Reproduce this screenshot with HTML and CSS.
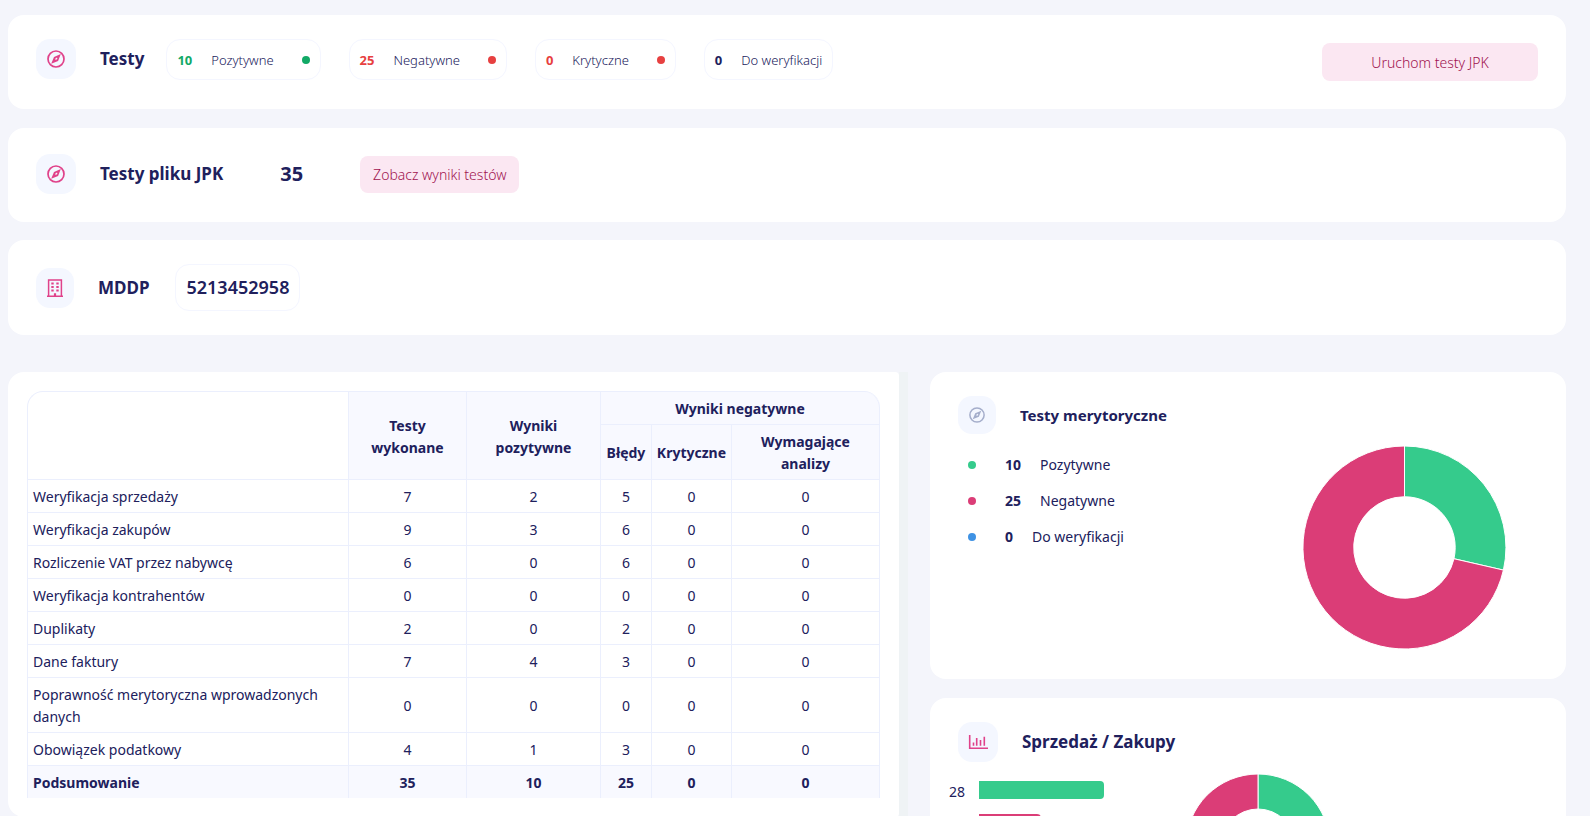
FILE: index.html
```html
<!DOCTYPE html>
<html lang="pl">
<head>
<meta charset="utf-8">
<meta name="viewport" content="width=device-width, initial-scale=1">
<title>Testy JPK</title>
<link rel="stylesheet" href="styles.css">
</head>
<body>
<svg class="defs" aria-hidden="true">
  <symbol id="compass" viewBox="0 0 18 18">
    <circle cx="9" cy="9" r="8" fill="none" stroke="currentColor" stroke-width="1.7"/>
    <path fill="currentColor" fill-rule="evenodd" d="M13.8 4.1 7 6.9 4.2 13.8 11.1 11zM9.9 7.6 10.5 8.3 9.1 10 7.9 8.9z"/>
  </symbol>
  <symbol id="building" viewBox="0 0 18 18">
    <path fill="none" stroke="currentColor" stroke-width="1.5" d="M2.6 17V.9h12.8V17M1 17.2h16"/>
    <path fill="currentColor" d="M5.3 3.4h2.4v2H5.3zm5 0h2.4v2h-2.4zM5.3 6.9h2.4v2H5.3zm5 0h2.4v2h-2.4zM5.3 10.4h2.4v2H5.3zm5 0h2.4v2h-2.4zM7.9 14.2h2.2v3H7.9z"/>
  </symbol>
  <symbol id="chart" viewBox="0 0 20 18">
    <path fill="none" stroke="currentColor" stroke-width="1.6" d="M1.7 2v13.3H20M5.5 9.5v3.3M8.7 5v7.8M12.5 7v5.8M16.3 3.7v9.1"/>
  </symbol>
</svg>
<main class="page">
  <section class="card card-tests">
    <span class="icon-box"><svg class="icon"><use href="#compass"/></svg></span>
    <h2 class="title">Testy</h2>
    <div class="pills">
      <div class="pill"><b class="ok">10</b><span>Pozytywne</span><i class="dot dot-ok"></i></div>
      <div class="pill"><b class="bad">25</b><span>Negatywne</span><i class="dot dot-bad"></i></div>
      <div class="pill"><b class="bad">0</b><span>Krytyczne</span><i class="dot dot-bad"></i></div>
      <div class="pill"><b>0</b><span>Do weryfikacji</span></div>
    </div>
    <button type="button" class="btn btn-run">Uruchom testy JPK</button>
  </section>

  <section class="card card-file">
    <span class="icon-box"><svg class="icon"><use href="#compass"/></svg></span>
    <h2 class="title">Testy pliku JPK</h2>
    <strong class="total">35</strong>
    <button type="button" class="btn">Zobacz wyniki testów</button>
  </section>

  <section class="card card-company">
    <span class="icon-box icon-box-s"><svg class="icon"><use href="#building"/></svg></span>
    <h2 class="title">MDDP</h2>
    <div class="nip">5213452958</div>
  </section>

  <div class="columns">
    <div class="scroll-pane">
      <section class="table-card">
        <table class="results">
          <colgroup><col><col class="c-done"><col class="c-pos"><col class="c-err"><col class="c-crit"><col class="c-req"></colgroup>
          <thead>
            <tr><td rowspan="2"></td><th rowspan="2" scope="col">Testy wykonane</th><th rowspan="2" scope="col">Wyniki pozytywne</th><th colspan="3" scope="colgroup">Wyniki negatywne</th></tr>
            <tr><th scope="col">Błędy</th><th scope="col">Krytyczne</th><th scope="col" class="narrow">Wymagające analizy</th></tr>
          </thead>
          <tbody>
            <tr><td>Weryfikacja sprzedaży</td><td>7</td><td>2</td><td>5</td><td>0</td><td>0</td></tr>
            <tr><td>Weryfikacja zakupów</td><td>9</td><td>3</td><td>6</td><td>0</td><td>0</td></tr>
            <tr><td>Rozliczenie VAT przez nabywcę</td><td>6</td><td>0</td><td>6</td><td>0</td><td>0</td></tr>
            <tr><td>Weryfikacja kontrahentów</td><td>0</td><td>0</td><td>0</td><td>0</td><td>0</td></tr>
            <tr><td>Duplikaty</td><td>2</td><td>0</td><td>2</td><td>0</td><td>0</td></tr>
            <tr><td>Dane faktury</td><td>7</td><td>4</td><td>3</td><td>0</td><td>0</td></tr>
            <tr><td>Poprawność merytoryczna wprowadzonych danych</td><td>0</td><td>0</td><td>0</td><td>0</td><td>0</td></tr>
            <tr><td>Obowiązek podatkowy</td><td>4</td><td>1</td><td>3</td><td>0</td><td>0</td></tr>
          </tbody>
          <tfoot>
            <tr><th scope="row">Podsumowanie</th><th>35</th><th>10</th><th>25</th><th>0</th><th>0</th></tr>
          </tfoot>
        </table>
      </section>
      <div class="track"></div>
    </div>

    <div class="side">
      <section class="card-side">
        <header class="side-head">
          <span class="icon-box icon-box-sq"><svg class="icon icon-muted"><use href="#compass"/></svg></span>
          <h3 class="side-title">Testy merytoryczne</h3>
        </header>
        <div class="merit">
          <ul class="legend">
            <li><i class="dot dot-green"></i><b>10</b><span>Pozytywne</span></li>
            <li><i class="dot dot-pink"></i><b>25</b><span>Negatywne</span></li>
            <li><i class="dot dot-blue"></i><b>0</b><span>Do weryfikacji</span></li>
          </ul>
          <svg class="donut" viewBox="-102 -102 204 204" role="img" aria-label="10 pozytywne, 25 negatywne">
            <path class="s-green" d="M0-102A102 102 0 0 1 99.4 22.7L49.7 11.3A51 51 0 0 0 0-51z"/>
            <path class="s-pink" d="M99.4 22.7A102 102 0 1 1 0-102V-51A51 51 0 1 0 49.7 11.3z"/>
          </svg>
        </div>
      </section>

      <section class="card-side">
        <header class="side-head">
          <span class="icon-box"><svg class="icon icon-chart"><use href="#chart"/></svg></span>
          <h2 class="title">Sprzedaż / Zakupy</h2>
        </header>
        <div class="sales">
          <div class="bars">
            <span class="bar-label">28</span><div class="bar bar-green"></div>
            <span></span><div class="bar bar-pink"></div>
          </div>
          <svg class="donut-s" viewBox="-72 -72 144 144" role="img" aria-label="Sprzedaż i zakupy">
            <path class="s-green" d="M0-72A72 72 0 0 1 0 72V37A37 37 0 0 0 0-37z"/>
            <path class="s-pink" d="M0 72A72 72 0 0 1 0-72V-37A37 37 0 0 0 0 37z"/>
          </svg>
        </div>
      </section>
    </div>
  </div>
</main>
</body>
</html>
```
FILE: styles.css
```css
* { box-sizing: border-box; }

body {
  margin: 0;
  height: 100vh;
  overflow: hidden;
  background: #f4f5fb;
  color: #20205c;
  font-family: "Segoe UI", "Noto Sans", "Open Sans", sans-serif;
  font-size: 14px;
  line-height: 22px;
}

h2, h3, ul { margin: 0; padding: 0; }

.defs { display: none; }

.page { padding: 15px 24px 0 8px; }

.card {
  display: flex;
  align-items: center;
  padding: 24px 28px;
  border-radius: 16px;
  background: #fff;
}

.icon-box {
  display: flex;
  flex: none;
  align-items: center;
  justify-content: center;
  width: 40px;
  height: 40px;
  border-radius: 14px;
  background: #f4f7ff;
}
.icon-box-s { width: 38px; }
.icon-box-sq { width: 38px; height: 38px; }

.icon { width: 18px; height: 18px; color: #e0428a; }
.icon-muted { width: 16px; height: 16px; color: #a5aecb; }
.icon-chart { width: 20px; }

.title { font-size: 17px; font-weight: 700; line-height: 24px; }

/* Test counters */
.card-tests { min-height: 94px; }
.card-tests .icon-box,
.card-tests .pills { align-self: flex-start; }
.card-tests .title { align-self: flex-start; margin: 8px 22px 8px 24px; }
.pills { display: flex; gap: 28px; }
.pill {
  display: flex;
  align-items: center;
  height: 41px;
  padding: 0 10px;
  border: 1px solid #f4f6ff;
  border-radius: 14px;
  font-size: 13px;
}
.pill b { margin-right: 19px; }
.pill span, .btn { font-weight: 300; }
.ok { color: #12a966; }
.bad { color: #e74040; }

.dot { flex: none; width: 8px; height: 8px; border-radius: 50%; }
.pill .dot { margin-left: 28px; }
.dot-ok { background: #12a966; }
.dot-bad { background: #e74040; }
.dot-green { background: #35cb8c; }
.dot-pink { background: #db3d77; }
.dot-blue { background: #3f92e4; }

.btn {
  height: 37px;
  padding: 0 13px;
  border: 0;
  border-radius: 8px;
  background: #fbe7f2;
  color: #a0124f;
  font-family: inherit;
  font-size: 14px;
}
.btn-run { width: 216px; height: 38px; margin-left: auto; }

/* File tests */
.card-file { min-height: 94px; margin-top: 19px; padding-bottom: 26px; }
.card-file .title { margin-left: 24px; }
.total { margin: 0 57px; font-size: 20px; }

/* Company */
.card-company { min-height: 95px; margin-top: 18px; }
.card-company .title { margin: 0 26px 0 24px; }
.nip {
  padding: 10px;
  border: 1px solid #f4f6ff;
  border-radius: 14px;
  font-size: 18px;
  font-weight: 600;
  line-height: 25px;
}

.columns {
  display: grid;
  grid-template-columns: 900fr 636fr;
  align-items: start;
  gap: 22px;
  margin-top: 37px;
}

.scroll-pane { display: flex; }
.table-card {
  flex: 1;
  padding: 19px;
  border-radius: 16px 4px 4px 16px;
  background: #fff;
}
.track { width: 9px; background: #eff3f5; }

.results {
  width: 100%;
  table-layout: fixed;
  border-spacing: 0;
  border: solid #ebeffd;
  border-width: 1px 0 0 1px;
  border-radius: 16px 16px 0 0;
}
.c-done { width: 118px; }
.c-pos { width: 134px; }
.c-err { width: 51px; }
.c-crit { width: 80px; }
.c-req { width: 148px; }
.results th, .results td {
  padding: 6px 5px 4px;
  border: solid #ebeffd;
  border-width: 0 1px 1px 0;
  text-align: center;
}
.results thead th { padding: 6px 0 4px; }
.results th { background: #f8f9ff; font-weight: 700; }
.results thead th[rowspan] { padding: 6px 20px 4px; }
.results thead .narrow { padding: 6px 24px 4px; }
.results thead tr:first-child th:last-child { border-top-right-radius: 16px; }
.results tbody td:first-child, .results tfoot th:first-child { text-align: left; }
.results tfoot th { border-bottom: 0; }

/* Side cards */
.side { display: grid; gap: 19px; }
.card-side {
  padding: 24px 28px;
  border-radius: 16px;
  background: #fff;
}
.side-head { display: flex; align-items: center; gap: 24px; }
.side-title { font-size: 15px; font-weight: 700; }

.merit { display: flex; justify-content: space-between; padding: 12px 32px 6px 10px; }
.legend { display: grid; gap: 14px; align-content: start; margin-top: 8px; list-style: none; }
.legend li { display: flex; align-items: center; }
.legend b { margin: 0 19px 0 29px; }
.donut { width: 203px; height: 203px; }
.s-green, .s-pink { stroke: #fff; stroke-width: 1; }
.s-green { fill: #35cb8c; }
.s-pink { fill: #db3d77; }

.sales { display: flex; padding-top: 12px; }
.bars {
  display: grid;
  grid-template-columns: 30px 125px;
  grid-auto-rows: 18px;
  gap: 15px 0;
  margin: 7px 82px 0 -9px;
}
.bar { border-radius: 0 4px 4px 0; }
.bar-green { background: #35cb8c; }
.bar-pink { width: 62px; background: #db3d77; }
.donut-s { width: 144px; height: 144px; }
```
